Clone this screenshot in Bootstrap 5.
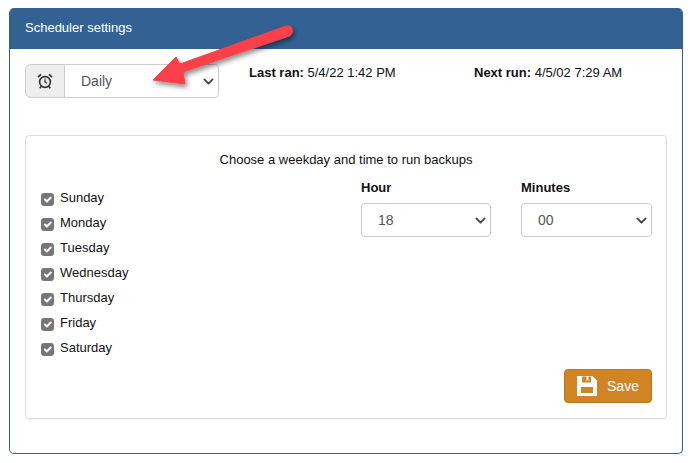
<!DOCTYPE html>
<html lang="en">
<head>
    <meta charset="UTF-8">
    <meta name="viewport" content="width=device-width, initial-scale=1.0">
    <title>Scheduler settings</title>
    <link href="https://cdn.jsdelivr.net/npm/bootstrap@5.3.0/dist/css/bootstrap.min.css" rel="stylesheet">
    <style>
        body {
            font-family: "Liberation Sans", Arial, sans-serif;
            font-size: 13px;
            color: #111;
            background: #fff;
        }
        .sched-panel {
            margin: 8px 9px 0 9px;
            height: 446px;
            border: 1px solid #2f6096;
            border-top: 0;
            border-radius: 5px;
            position: relative;
            overflow: hidden;
        }
        .sched-head {
            background: #336193;
            color: #fff;
            height: 41px;
            padding: 12px 15px 0;
            font-size: 13px;
            line-height: 16px;
        }
        .sched-body {
            padding: 15px 15px 0;
        }
        .sched-top {
            height: 71px;
        }
        .freq-group {
            width: 194px;
            height: 34px;
        }
        .freq-group .input-group-text {
            width: 40px;
            padding: 0;
            justify-content: center;
            background: #eee;
            border-color: #ccc;
        }
        .sched-select {
            height: 34px;
            font-size: 14px;
            color: #555;
            border-color: #ccc;
            padding: 0 24px 0 16px;
            border-radius: 4px;
            background-image: url("data:image/svg+xml,%3csvg xmlns='http://www.w3.org/2000/svg' viewBox='0 0 16 16'%3e%3cpath fill='none' stroke='%23444' stroke-linecap='round' stroke-linejoin='round' stroke-width='2.6' d='m2 5 6 6 6-6'/%3e%3c/svg%3e");
            background-position: right 3px center;
            background-size: 13px 11px;
        }
        .last-run {
            margin-left: 30px;
            width: 225px;
            line-height: 16px;
            margin-top: 1px;
        }
        .next-run {
            line-height: 16px;
            margin-top: 1px;
        }
        .inner-box {
            height: 284px;
            border: 1px solid #ddd;
            border-radius: 4px;
            box-shadow: 0 1px 1px rgba(0, 0, 0, .05);
            padding: 16px 15px 15px 15px;
            position: relative;
        }
        .inner-title {
            text-align: center;
            font-size: 13px;
            line-height: 16px;
            height: 21px;
        }
        .day-list {
            width: 320px;
            flex-shrink: 0;
            padding-top: 17px;
        }
        .day-row {
            height: 25px;
            display: flex;
            gap: 6px;
            align-items: flex-start;
            line-height: 16px;
        }
        .day-tick {
            width: 13px;
            height: 13px;
            margin: 3px 0 0;
            background-color: #767676;
            border: 0;
            border-radius: 2px;
            background-size: 13px 13px;
        }
        .day-tick:checked {
            background-color: #767676;
            border-color: #767676;
        }
        .time-wrap {
            gap: 30px;
            padding-top: 7px;
        }
        .time-col {
            width: 130px;
            flex-shrink: 0;
        }
        .time-col:last-child {
            width: 131px;
        }
        .time-label {
            font-weight: 700;
            line-height: 16px;
            margin-bottom: 7px;
        }
        .save-btn {
            position: absolute;
            right: 14px;
            bottom: 15px;
            width: 88px;
            height: 34px;
            background: #d08423;
            border: 1px solid #b97519;
            color: #fff;
            font-size: 14px;
            padding: 0;
            gap: 10px;
            border-radius: 4px;
        }
        .save-btn:hover {
            background: #bd7619;
            color: #fff;
        }
        .red-arrow {
            position: absolute;
            left: 140px;
            top: 15px;
            overflow: visible;
            pointer-events: none;
        }
    </style>
</head>

<body>
    <div class="sched-panel">
        <div class="sched-head">Scheduler settings</div>
        <div class="sched-body">
            <div class="d-flex sched-top">
                <div class="input-group freq-group flex-nowrap">
                    <span class="input-group-text">
                        <svg width="18" height="18" viewBox="0 0 18 18" fill="none" stroke="#333" stroke-width="1.6">
                            <circle cx="9" cy="10" r="5.4"/>
                            <path d="M9 6.800V10l2 1.200" stroke-width="1.200"/>
                            <path d="M2 5.200 5 2.400M16 5.200 13 2.400" stroke-width="1.800"/>
                            <path d="M5 14.500l-1.200 1.700M13 14.500l1.200 1.700"/>
                        </svg>
                    </span>
                    <select class="form-select sched-select">
                        <option>Daily</option>
                    </select>
                </div>
                <div class="last-run"><strong>Last ran:</strong> 5/4/22 1:42 PM</div>
                <div class="next-run"><strong>Next run:</strong> 4/5/02 7:29 AM</div>
            </div>

            <div class="inner-box">
                <div class="inner-title">Choose a weekday and time to run backups</div>
                <div class="d-flex">
                    <div class="day-list">
                        <div class="day-row"><input class="form-check-input day-tick" type="checkbox" checked><span>Sunday</span></div>
                        <div class="day-row"><input class="form-check-input day-tick" type="checkbox" checked><span>Monday</span></div>
                        <div class="day-row"><input class="form-check-input day-tick" type="checkbox" checked><span>Tuesday</span></div>
                        <div class="day-row"><input class="form-check-input day-tick" type="checkbox" checked><span>Wednesday</span></div>
                        <div class="day-row"><input class="form-check-input day-tick" type="checkbox" checked><span>Thursday</span></div>
                        <div class="day-row"><input class="form-check-input day-tick" type="checkbox" checked><span>Friday</span></div>
                        <div class="day-row"><input class="form-check-input day-tick" type="checkbox" checked><span>Saturday</span></div>
                    </div>
                    <div class="d-flex time-wrap">
                        <div class="time-col">
                            <div class="time-label">Hour</div>
                            <select class="form-select sched-select"><option>18</option></select>
                        </div>
                        <div class="time-col">
                            <div class="time-label">Minutes</div>
                            <select class="form-select sched-select"><option>00</option></select>
                        </div>
                    </div>
                </div>
                <button type="button" class="btn save-btn d-flex align-items-center justify-content-center">
                    <svg width="20" height="20" viewBox="0 0 20 20" fill="#fff">
                        <path fill-rule="evenodd" d="M0 0h15.500L20 4.500V20H0zM5 .5V6.500h9V.5h-2.500V4.500H9.500V.5zM4 11V17h12V11z"/>
                    </svg>
                    <span>Save</span>
                </button>
            </div>
        </div>
        <svg class="red-arrow" width="146" height="66" viewBox="0 0 146 66">
            <defs>
                <filter id="arrowShade" x="-20%" y="-30%" width="150%" height="170%">
                    <feDropShadow dx="2" dy="3" stdDeviation="2.500" flood-color="#000" flood-opacity=".45"/>
                </filter>
            </defs>
            <path filter="url(#arrowShade)" fill="#fb4148" stroke="#fb4148" stroke-width="1" stroke-linejoin="round"
                d="M3 57 26 34 30 41 136 3Q141 2 142 6 143 11 139 13L33 49 35 61Z"/>
        </svg>
    </div>

    <script src="https://cdn.jsdelivr.net/npm/bootstrap@5.3.0/dist/js/bootstrap.bundle.min.js"></script>
</body>

</html>
